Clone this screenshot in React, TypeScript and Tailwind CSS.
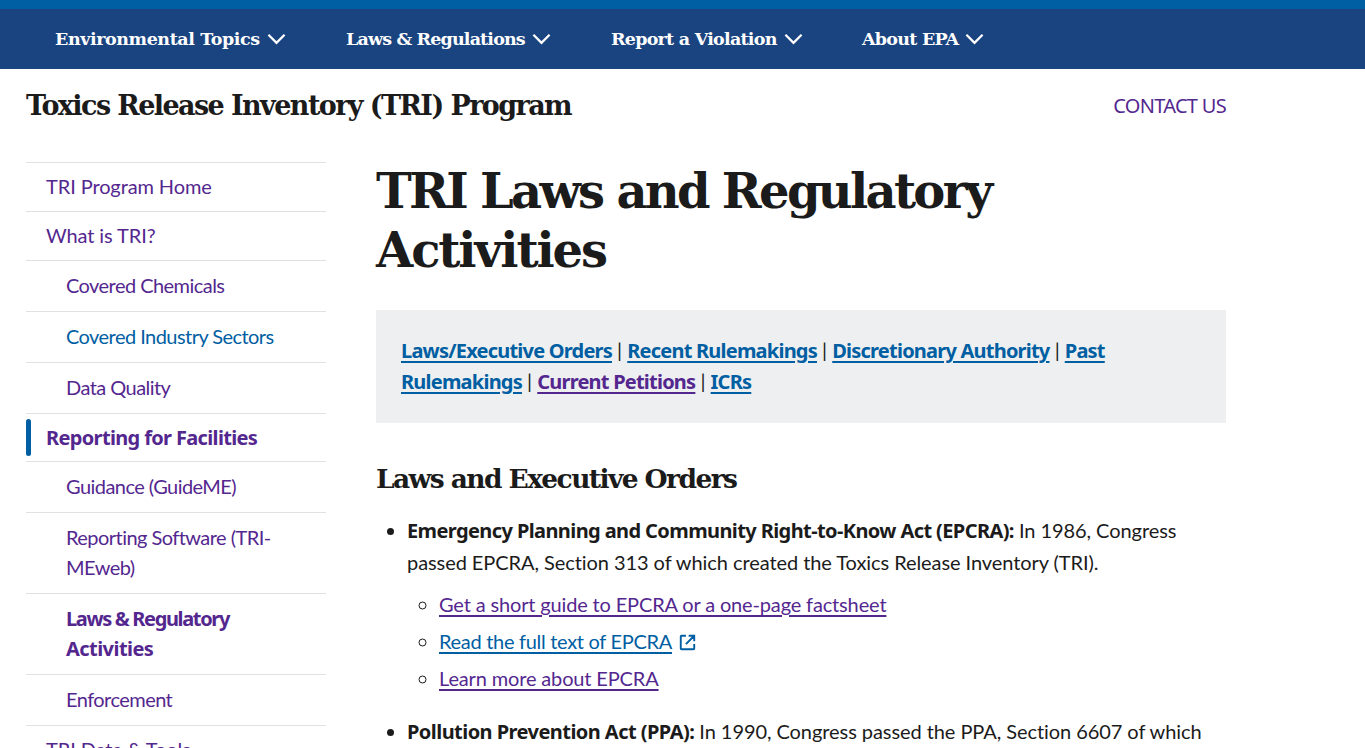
const serif = "font-['DejaVu_Serif',serif]";
const boldSans = "font-['Noto_Sans',sans-serif] font-bold";

function Chevron() {
  return (
    <svg viewBox="0 0 20 12" className="ml-[7px] h-[12px] w-[19px]" fill="none" stroke="white" strokeWidth="2.4">
      <path d="M1.5 1.5 L10 10 L18.5 1.5" />
    </svg>
  );
}

function NavItem({ label, className, track }: { label: string; className: string; track: string }) {
  return (
    <div className={`flex items-center ${className}`}>
      <span className={`${serif} text-[17.5px] font-bold text-white ${track}`}>{label}</span>
      <Chevron />
    </div>
  );
}

function SideLink({ label, sub, blue, h }: { label: string; sub?: boolean; blue?: boolean; h: string }) {
  return (
    <div
      className={`flex items-center border-t border-[#dfe1e2] pb-[2px] ${h} ${
        sub ? "pl-10 tracking-[-0.55px]" : "pl-5 tracking-[-0.1px]"
      }`}
    >
      <span className={`text-[20px] leading-[30px] ${blue ? "text-[#005ea2]" : "text-[#54278f]"}`}>{label}</span>
    </div>
  );
}

function BoxLink({ children, visited }: { children: string; visited?: boolean }) {
  return (
    <a
      className={`${boldSans} tracking-[-0.78px] underline decoration-2 underline-offset-[3px] ${
        visited ? "text-[#54278f]" : "text-[#005ea2]"
      }`}
    >
      {children}
    </a>
  );
}

export default function App() {
  return (
    <div className="h-[748px] w-full overflow-hidden bg-white font-['Lato',sans-serif] text-[#1b1b1b]">
      <div className="h-[9px] bg-[#005ea2]" />
      <nav className="flex h-[60px] items-center bg-[#1a4480] pl-[55px]">
        <NavItem label="Environmental Topics" className="w-[291px]" track="tracking-[-0.42px]" />
        <NavItem label="Laws & Regulations" className="w-[265px]" track="tracking-[-0.85px]" />
        <NavItem label="Report a Violation" className="w-[251px]" track="tracking-[-0.75px]" />
        <NavItem label="About EPA" className="" track="tracking-[-0.75px]" />
      </nav>
      <div className="mx-[26px] w-[1200px]">
        <div className="flex h-[73px] items-center justify-between pt-[1px]">
          <div className={`${serif} text-[27px] font-bold tracking-[-1.58px] text-[#1b1b1b]`}>
            Toxics Release Inventory (TRI) Program
          </div>
          <a className="font-['Noto_Sans',sans-serif] text-[20px] tracking-[-0.7px] text-[#54278f]">CONTACT US</a>
        </div>
        <div className="flex pt-[20px]">
          <aside className="w-[300px] shrink-0">
            <SideLink label="TRI Program Home" h="h-[49px]" />
            <SideLink label="What is TRI?" h="h-[49px]" />
            <SideLink label="Covered Chemicals" sub h="h-[51px]" />
            <SideLink label="Covered Industry Sectors" sub blue h="h-[51px]" />
            <SideLink label="Data Quality" sub h="h-[51px]" />
            <div className="relative flex h-[48px] items-center border-t border-[#dfe1e2] pl-5">
              <div className="absolute left-0 top-[5px] h-[37px] w-[5px] rounded-full bg-[#005ea2]" />
              <span className={`${boldSans} text-[20px] leading-[30px] tracking-[-0.65px] text-[#54278f]`}>
                Reporting for Facilities
              </span>
            </div>
            <SideLink label="Guidance (GuideME)" sub h="h-[51px]" />
            <SideLink label="Reporting Software (TRI-MEweb)" sub h="h-[81px]" />
            <div className="flex h-[81px] items-center border-t border-[#dfe1e2] pl-10">
              <span className={`${boldSans} text-[20px] leading-[30px] text-[#54278f]`}>
                <span className="block tracking-[-1.35px]">Laws & Regulatory</span>
                <span className="block tracking-[-0.55px]">Activities</span>
              </span>
            </div>
            <SideLink label="Enforcement" sub h="h-[51px]" />
            <SideLink label="TRI Data & Tools" h="h-[49px]" />
          </aside>
          <main className="ml-[50px] w-[850px]">
            <h1 className={`${serif} text-[48px] font-bold leading-[59px] tracking-[-2.7px] text-[#1b1b1b]`}>
              TRI Laws and Regulatory <span className="tracking-[-2.1px]">Activities</span>
            </h1>
            <div className="mt-[30px] h-[113px] bg-[#edeff0] px-[25px] py-[25px] text-[20px] leading-[31px]">
              <BoxLink>Laws/Executive Orders</BoxLink> | <BoxLink>Recent Rulemakings</BoxLink> |{" "}
              <BoxLink>Discretionary Authority</BoxLink> | <BoxLink>Past Rulemakings</BoxLink> |{" "}
              <BoxLink visited>Current Petitions</BoxLink> | <BoxLink>ICRs</BoxLink>
            </div>
            <h2 className={`${serif} mt-[38px] text-[26.5px] font-bold leading-[36px] tracking-[-1.6px]`}>
              Laws and Executive Orders
            </h2>
            <ul className="mt-[17px] list-disc pl-[31px] text-[20px] leading-[32px] tracking-[-0.07px]">
              <li>
                <b className={`${boldSans} leading-[20px] tracking-[-0.6px]`}>
                  Emergency Planning and Community Right-to-Know Act (EPCRA):
                </b>{" "}
                In 1986, Congress passed EPCRA, Section 313 of which created the Toxics Release Inventory (TRI).
                <ul className="mt-[10px] list-[circle] pl-[32px] tracking-[-0.15px]">
                  <li className="mb-[5px]">
                    <a className="text-[#54278f] underline underline-offset-[3px]">
                      Get a short guide to EPCRA or a one-page factsheet
                    </a>
                  </li>
                  <li className="mb-[5px]">
                    <a className="tracking-[-0.3px] text-[#005ea2] underline underline-offset-[3px]">
                      Read the full text of EPCRA
                    </a>
                    <svg
                      viewBox="0 0 24 24"
                      className="ml-[6px] inline-block h-[19px] w-[19px] align-[-3px]"
                      fill="none"
                      stroke="#005ea2"
                      strokeWidth="2.4"
                    >
                      <path d="M10 3.5 H4.5 a1 1 0 0 0 -1 1 V19.5 a1 1 0 0 0 1 1 H19.5 a1 1 0 0 0 1 -1 V14 M13.5 3.5 H20.5 V10.5 M20.5 3.5 L10 14" />
                    </svg>
                  </li>
                  <li>
                    <a className="text-[#54278f] underline underline-offset-[3px]">Learn more about EPCRA</a>
                  </li>
                </ul>
              </li>
              <li className="mt-[21px]">
                <b className={`${boldSans} leading-[20px] tracking-[-0.55px]`}>Pollution Prevention Act (PPA):</b> In
                1990, Congress passed the PPA, Section 6607 of which requires additional reporting.
              </li>
            </ul>
          </main>
        </div>
      </div>
    </div>
  );
}
